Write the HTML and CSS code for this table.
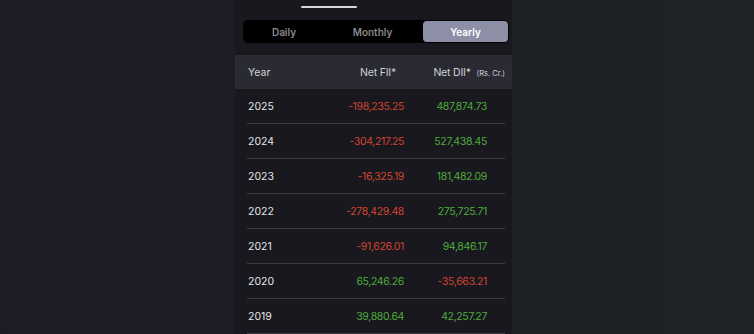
FILE: index.html
```html
<!DOCTYPE html>
<html>
<head>
<meta charset="utf-8">
<link rel="stylesheet" href="styles.css">
</head>
<body>
<div class="page">
  <div class="panel">
    <div class="handle"></div>
    <div class="segments">
      <div class="seg">Daily</div>
      <div class="seg">Monthly</div>
      <div class="seg active">Yearly</div>
    </div>
    <div class="thead">
      <div class="h-year">Year</div>
      <div class="h-fii">Net FII*</div>
      <div class="h-dii">Net DII* <span class="unit">(Rs. Cr.)</span></div>
    </div>
    <div class="rows">
      <div class="row"><span class="yr">2025</span><span class="neg">-198,235.25</span><span class="pos">487,874.73</span></div>
      <div class="row"><span class="yr">2024</span><span class="neg">-304,217.25</span><span class="pos">527,438.45</span></div>
      <div class="row"><span class="yr">2023</span><span class="neg">-16,325.19</span><span class="pos">181,482.09</span></div>
      <div class="row"><span class="yr">2022</span><span class="neg">-278,429.48</span><span class="pos">275,725.71</span></div>
      <div class="row"><span class="yr">2021</span><span class="neg">-91,626.01</span><span class="pos">94,846.17</span></div>
      <div class="row"><span class="yr">2020</span><span class="pos">65,246.26</span><span class="neg">-35,663.21</span></div>
      <div class="row"><span class="yr">2019</span><span class="pos">39,880.64</span><span class="pos">42,257.27</span></div>
    </div>
  </div>
</div>
</body>
</html>
```
FILE: styles.css
```css
html, body {
  margin: 0;
  padding: 0;
  height: 100%;
}
body {
  background: linear-gradient(90deg, #1b1c25 0%, #1c1d25 40%, #1e2125 75%, #1f2324 100%);
  font-family: Inter, "Open Sans", sans-serif;
  overflow: hidden;
}
.page {
  display: flex;
  padding-left: 235px;
  height: 334px;
}
.panel {
  width: 277px;
  background: #18181e;
  display: flex;
  flex-direction: column;
}
.handle {
  width: 56px;
  height: 2px;
  margin: 6px 0 0 66px;
  background: #d8d8dc;
  border-radius: 1px;
}
.segments {
  margin: 12px 3px 0 8px;
  height: 23px;
  background: #000;
  border-radius: 5px;
  padding: 1px;
  box-sizing: border-box;
  display: grid;
  grid-template-columns: 90px 89px 1fr;
}
.seg {
  display: flex;
  align-items: center;
  justify-content: center;
  font-size: 10px;
  font-weight: 600;
  color: #88888e;
  border-radius: 4px;
}
.seg:first-child {
  padding-right: 10px;
}
.seg:nth-child(2) {
  padding-right: 12px;
}
.seg.active {
  background: #8d8fa6;
  color: #ffffff;
}
.thead {
  margin-top: 12px;
  height: 34px;
  background: #2a2a32;
  display: grid;
  grid-template-columns: 76px 72px 1fr;
  align-items: center;
  font-size: 10.5px;
  color: #cfd0d4;
  padding: 0 7px 0 13px;
}
.h-fii, .h-dii {
  text-align: right;
  letter-spacing: -0.2px;
}
.unit {
  font-size: 7.5px;
  margin-left: 3px;
  letter-spacing: 0;
}
.rows {
  display: flex;
  flex-direction: column;
  margin: 0 7px 0 12px;
}
.row {
  height: 34px;
  border-bottom: 1px solid #3a3b43;
  display: grid;
  grid-template-columns: 77px 80px 83px 1fr;
  align-items: center;
  font-size: 10.5px;
  letter-spacing: -0.35px;
}
.row span {
  text-align: right;
}
.row .yr {
  text-align: left;
  padding-left: 1px;
  color: #e6e6ea;
  letter-spacing: 0;
}
.neg {
  color: #d2442f;
}
.pos {
  color: #4eab3b;
}
```
